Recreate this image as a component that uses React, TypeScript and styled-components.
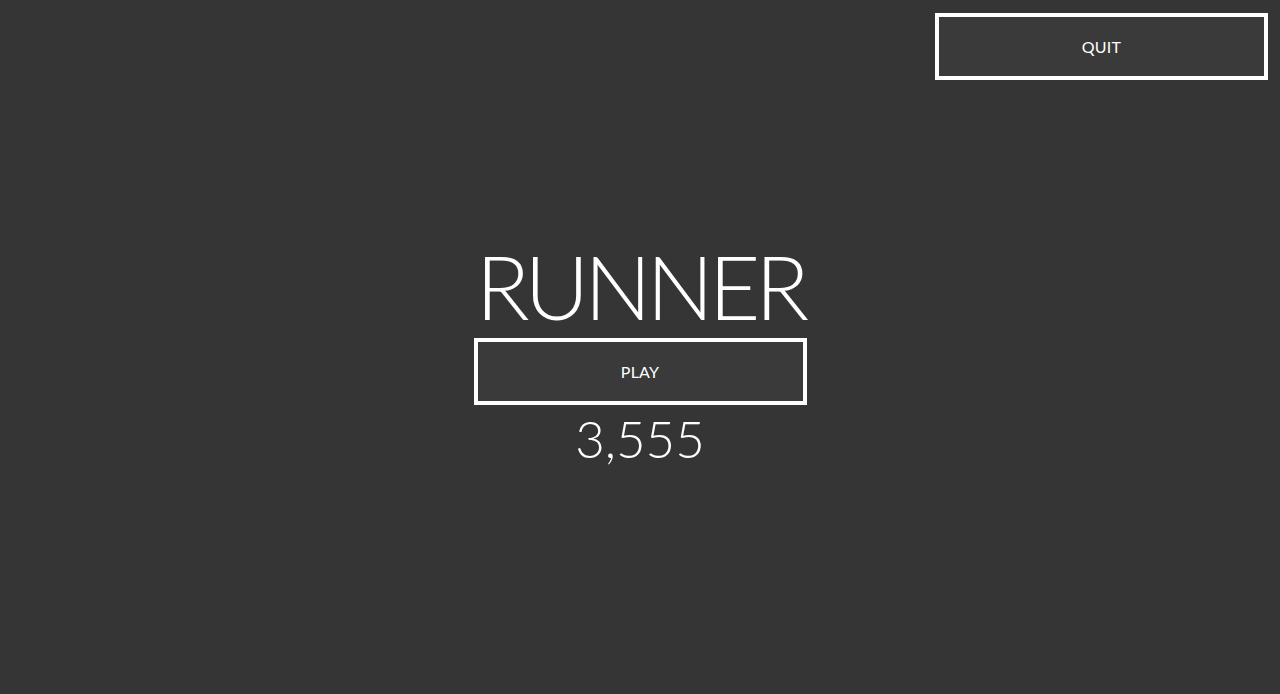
import React from 'react';
import styled, { createGlobalStyle } from 'styled-components';

const Global = createGlobalStyle`
  html, body, #root {
    margin: 0;
    height: 100%;
  }
  body {
    background: #353535;
    font-family: Lato, "Open Sans", sans-serif;
    color: #fff;
  }
`;

const Screen = styled.div`
  position: relative;
  height: 694px;
  display: flex;
  flex-direction: column;
  align-items: center;
  justify-content: center;
`;

const TopBar = styled.div`
  position: absolute;
  top: 13px;
  right: 12px;
`;

const Button = styled.button`
  width: 333px;
  height: 67px;
  box-sizing: border-box;
  border: 4px solid #fff;
  background: #3a3a3a;
  color: #fff;
  font-family: Lato, "Open Sans", sans-serif;
  font-weight: 400;
  font-size: 16px;
  letter-spacing: 0.2px;
  cursor: pointer;
  padding: 0;
`;

const Title = styled.h1`
  margin: 0;
  font-weight: 300;
  font-size: 89px;
  line-height: 1;
  letter-spacing: -5px;
  padding-bottom: 8px;
`;

const Score = styled.div`
  margin-top: 8px;
  font-weight: 300;
  font-size: 51px;
  line-height: 1;
`;

const Center = styled.div`
  display: flex;
  flex-direction: column;
  align-items: center;
  margin-top: 10px;
`;

export default function App() {
  return (
    <>
      <Global />
      <Screen>
        <TopBar>
          <Button>QUIT</Button>
        </TopBar>
        <Center>
          <Title>RUNNER</Title>
          <Button>PLAY</Button>
          <Score>3,555</Score>
        </Center>
      </Screen>
    </>
  );
}
